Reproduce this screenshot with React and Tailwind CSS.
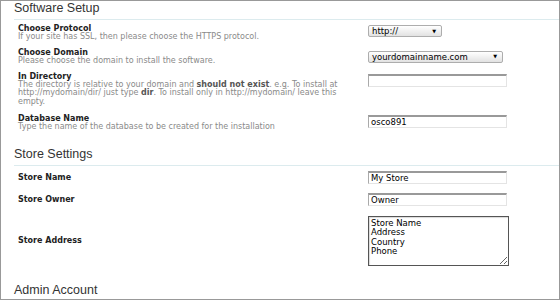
import React from 'react';

const Heading = ({ children, className = '' }) => (
  <h2
    className={`ml-[13px] pb-[3px] border-b border-[#dcebee] text-[12.5px] leading-[15px] text-[#333] font-['Liberation_Sans',Arial,sans-serif] ${className}`}
  >
    {children}
  </h2>
);

const Label = ({ children }) => (
  <div className="text-[8px] leading-[9px] font-bold text-[#222]">{children}</div>
);

const Desc = ({ children }) => (
  <div className="text-[8px] leading-[8.4px] text-[#8a8a8a]">{children}</div>
);

const Select = ({ value, width }) => (
  <div
    className={`${width} h-[12px] flex items-center justify-between pl-[3px] pr-[5px] rounded-[2px] border border-[#adadad] bg-gradient-to-b from-white to-[#e2e2e2] text-[8.5px] leading-[10px] text-black`}
  >
    <span>{value}</span>
    <span className="text-[5px] leading-[5px]">▼</span>
  </div>
);

const TextInput = ({ value = '' }) => (
  <input
    readOnly
    value={value}
    className="block w-[139px] h-[13px] px-[2px] bg-white border-t-2 border-t-[#999] border-l border-l-[#aaa] border-r border-r-[#e4e4e4] border-b border-b-[#e4e4e4] text-[8.5px] leading-[10px] text-black outline-none"
  />
);

const Row = ({ label, desc, control, className = '' }) => (
  <div className={`flex ${className}`}>
    <div className="w-[350px] shrink-0">
      <Label>{label}</Label>
      {desc && <Desc>{desc}</Desc>}
    </div>
    {control}
  </div>
);

const StoreRow = ({ label, children, className = '' }) => (
  <div className={`flex items-center ${className}`}>
    <div className="w-[350px] shrink-0">
      <Label>{label}</Label>
    </div>
    {children}
  </div>
);

export default function App() {
  return (
    <div className="w-[560px] h-[300px] overflow-hidden bg-white border border-[#999] font-['DejaVu_Sans',Verdana,sans-serif]">
      <Heading>Software Setup</Heading>

      <div className="pl-[17px] pt-[4px]">
        <Row
          className="mb-[6.5px]"
          label="Choose Protocol"
          desc="If your site has SSL, then please choose the HTTPS protocol."
          control={
            <div className="pt-[1px]">
              <Select value="http://" width="w-[74px]" />
            </div>
          }
        />
        <Row
          className="mb-[6.5px]"
          label="Choose Domain"
          desc="Please choose the domain to install the software."
          control={
            <div className="pt-[3px]">
              <Select value="yourdomainname.com" width="w-[135px]" />
            </div>
          }
        />
        <Row
          className="mb-[7.5px]"
          label="In Directory"
          desc={
            <>
              The directory is relative to your domain and <b className="text-[#555]">should not exist</b>. e.g. To install at
              <br />
              http://mydomain/dir/ just type <b className="text-[#555]">dir</b>. To install only in http://mydomain/ leave this
              <br />
              empty.
            </>
          }
          control={
            <div className="pt-[2px]">
              <TextInput />
            </div>
          }
        />
        <Row
          label="Database Name"
          desc="Type the name of the database to be created for the installation"
          control={
            <div className="pt-[1px]">
              <TextInput value="osco891" />
            </div>
          }
        />
      </div>

      <Heading className="mt-[16px]">Store Settings</Heading>

      <div className="pl-[17px] pt-[5px]">
        <StoreRow className="mb-[9px]" label="Store Name">
          <TextInput value="My Store" />
        </StoreRow>
        <StoreRow className="mb-[10px]" label="Store Owner">
          <TextInput value="Owner" />
        </StoreRow>
        <StoreRow label="Store Address">
          <textarea
            readOnly
            value={'Store Name\nAddress\nCountry\nPhone'}
            className="block w-[141px] h-[50px] px-[2px] pt-[2px] bg-white border border-[#555] shadow-[inset_1px_1px_1px_rgba(0,0,0,0.15)] text-[8.5px] leading-[9.3px] text-black outline-none"
          />
        </StoreRow>
      </div>

      <Heading className="mt-[17.5px]">Admin Account</Heading>
    </div>
  );
}
